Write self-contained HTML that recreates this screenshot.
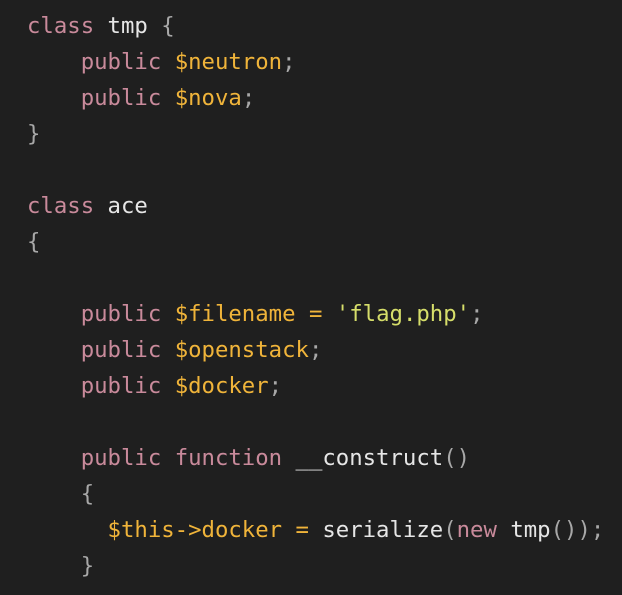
<!DOCTYPE html>
<html><head><style>
html,body{margin:0;padding:0;background:#1f1f1f;width:622px;height:595px;overflow:hidden}
pre{margin:0;position:absolute;left:27px;top:8px;font-family:"DejaVu Sans Mono",monospace;font-size:22.3px;line-height:36px;color:#e6e6e6}
.k{color:#c98a9b}.v{color:#f0b43a}.p{color:#a8a8a8}.s{color:#d6de6a}
</style></head><body>
<pre><span class="k">class</span> tmp <span class="p">{</span>
    <span class="k">public</span> <span class="v">$neutron</span><span class="p">;</span>
    <span class="k">public</span> <span class="v">$nova</span><span class="p">;</span>
<span class="p">}</span>

<span class="k">class</span> ace
<span class="p">{</span>

    <span class="k">public</span> <span class="v">$filename</span> <span class="v">=</span> <span class="s">'flag.php'</span><span class="p">;</span>
    <span class="k">public</span> <span class="v">$openstack</span><span class="p">;</span>
    <span class="k">public</span> <span class="v">$docker</span><span class="p">;</span>

    <span class="k">public</span> <span class="k">function</span> __construct<span class="p">()</span>
    <span class="p">{</span>
      <span class="v">$this-&gt;docker</span> <span class="v">=</span> serialize<span class="p">(</span><span class="k">new</span> tmp<span class="p">());</span>
    <span class="p">}</span></pre>
</body></html>
